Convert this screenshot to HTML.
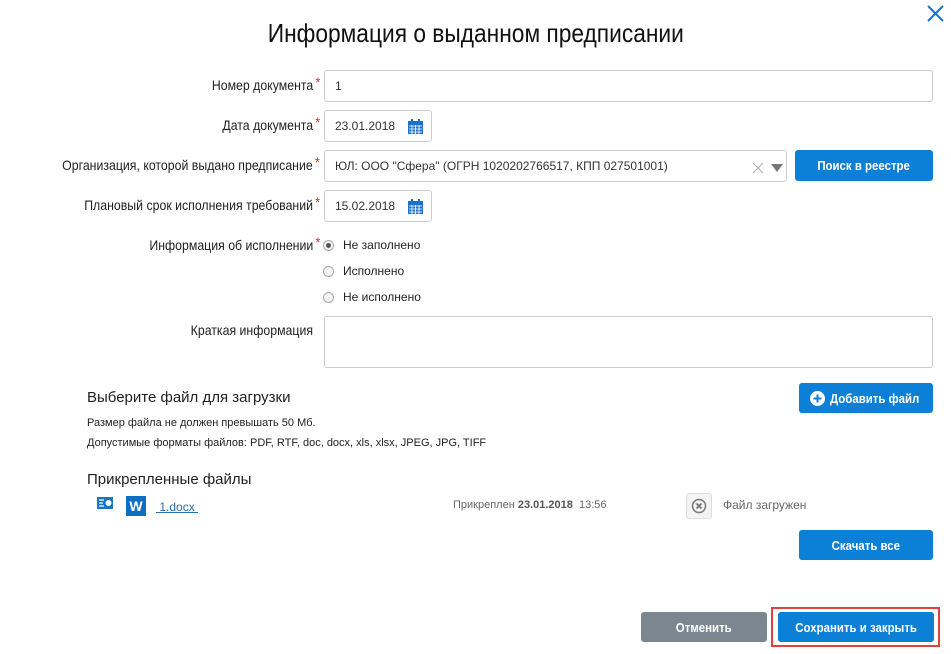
<!DOCTYPE html>
<html><head><meta charset="utf-8"><style>
body{margin:0;width:951px;height:654px;background:#fff;position:relative;overflow:hidden;font-family:"Liberation Sans",sans-serif;color:#222}
.a{position:absolute}
.lbl{position:absolute;right:638px;font-size:14px;white-space:nowrap;color:#222;transform:scaleX(0.88);transform-origin:right center}
.lbl b{color:#c0392b;font-weight:normal;position:absolute;right:-8px;top:-3px;font-size:14px}
.inp{position:absolute;border:1px solid #ccc;border-radius:3px;box-sizing:border-box;font-size:12px;color:#333;padding-left:10px;display:flex;align-items:center;background:#fff}
.btn{position:absolute;background:#0c7fd6;color:#fff;border-radius:3px;font-weight:bold;font-size:13px;display:flex;align-items:center;justify-content:center}
.btn span{display:inline-block;transform:scaleX(0.88);white-space:nowrap}
.rad{position:absolute;left:323px;width:11px;height:11px;border:1px solid #aaa;border-radius:50%;box-sizing:border-box;background:#f4f4f4}
.rt{position:absolute;left:343px;font-size:12px}
.cal{position:absolute;right:8px;top:8px}
</style></head><body>
<svg class="a" style="left:927px;top:5px" width="17" height="17"><path d="M1 1L16 16M16 1L1 16" stroke="#1a73c8" stroke-width="2"/></svg>
<div class="a" style="left:0;width:951px;top:18px;text-align:center;font-size:26px;color:#111"><span style="display:inline-block;transform:scaleX(0.875)">Информация о выданном предписании</span></div>

<div class="lbl" style="top:77px">Номер документа<b>*</b></div>
<div class="inp" style="left:324px;top:70px;width:609px;height:32px">1</div>

<div class="lbl" style="top:117px">Дата документа<b>*</b></div>
<div class="inp" style="left:324px;top:110px;width:108px;height:32px">23.01.2018
<svg class="cal" width="15" height="15"><rect x="0" y="2" width="15" height="13" fill="#1a73c8"/><rect x="3" y="0" width="2" height="4" fill="#1a73c8"/><rect x="10" y="0" width="2" height="4" fill="#1a73c8"/><path d="M1 7H14M1 10H14M1 13H14M4 6V15M7.5 6V15M11 6V15" stroke="#fff" stroke-width=".8"/></svg></div>

<div class="lbl" style="top:157px">Организация, которой выдано предписание<b>*</b></div>
<div class="inp" style="left:324px;top:150px;width:463px;height:32px">ЮЛ: ООО "Сфера" (ОГРН 1020202766517, КПП 027501001)
<svg class="a" style="left:427px;top:11px" width="32" height="12"><path d="M1 1L11 11M11 1L1 11" stroke="#aaa" stroke-width="1"/><path d="M19 2H31L25 10Z" fill="#777"/></svg></div>
<div class="btn" style="left:795px;top:150px;width:138px;height:31px"><span>Поиск в реестре</span></div>

<div class="lbl" style="top:197px">Плановый срок исполнения требований<b>*</b></div>
<div class="inp" style="left:324px;top:190px;width:108px;height:32px">15.02.2018
<svg class="cal" width="15" height="15"><rect x="0" y="2" width="15" height="13" fill="#1a73c8"/><rect x="3" y="0" width="2" height="4" fill="#1a73c8"/><rect x="10" y="0" width="2" height="4" fill="#1a73c8"/><path d="M1 7H14M1 10H14M1 13H14M4 6V15M7.5 6V15M11 6V15" stroke="#fff" stroke-width=".8"/></svg></div>

<div class="lbl" style="top:237px">Информация об исполнении<b>*</b></div>
<div class="rad" style="top:240px"><div style="width:5px;height:5px;background:#555;border-radius:50%;margin:2px"></div></div>
<div class="rt" style="top:238px">Не заполнено</div>
<div class="rad" style="top:266px"></div><div class="rt" style="top:264px">Исполнено</div>
<div class="rad" style="top:292px"></div><div class="rt" style="top:290px">Не исполнено</div>

<div class="lbl" style="top:322px">Краткая информация</div>
<div class="inp" style="left:324px;top:316px;width:609px;height:52px"></div>

<div class="a" style="left:87px;top:389px;font-size:15px">Выберите файл для загрузки</div>
<div class="btn" style="left:799px;top:383px;width:134px;height:30px"><svg width="15" height="15" style="margin-right:5px"><circle cx="7.5" cy="7.5" r="7.5" fill="#fff"/><path d="M7.5 3.5V11.5M3.5 7.5H11.5" stroke="#0c7fd6" stroke-width="2"/></svg><span style="transform-origin:left center;margin-right:-10px">Добавить файл</span></div>
<div class="a" style="left:87px;top:417px;font-size:11px">Размер файла не должен превышать 50 Мб.</div>
<div class="a" style="left:87px;top:437px;font-size:11px">Допустимые форматы файлов: PDF, RTF, doc, docx, xls, xlsx, JPEG, JPG, TIFF</div>

<div class="a" style="left:87px;top:471px;font-size:15px">Прикрепленные файлы</div>
<svg class="a" style="left:97px;top:496px" width="17" height="16"><rect x="0" y="1" width="16" height="12" fill="#1a73c8"/><path d="M2 4H7M2 7H6M2 10H7" stroke="#fff" stroke-width="1.2"/><circle cx="11.5" cy="7" r="3" fill="#fff"/></svg>
<div class="a" style="left:126px;top:496px;width:20px;height:20px;background:#0c6fc2;color:#fff;font-weight:bold;font-size:14px;text-align:center;line-height:20px">W</div>
<div class="a" style="left:156px;top:500px;font-size:12px;color:#2a6fb0;text-decoration:underline;white-space:pre"> 1.docx </div>
<div class="a" style="left:453px;top:499px;font-size:11px;color:#666">Прикреплен <b style="color:#555">23.01.2018</b>&nbsp; 13:56</div>
<div class="a" style="left:686px;top:493px;width:26px;height:26px;border:1px solid #ddd;border-radius:3px;box-sizing:border-box;background:#f4f4f4"><svg width="24" height="24"><circle cx="12" cy="12" r="6.5" fill="none" stroke="#777" stroke-width="1.5"/><path d="M9.5 9.5L14.5 14.5M14.5 9.5L9.5 14.5" stroke="#777" stroke-width="1.8"/></svg></div>
<div class="a" style="left:723px;top:498px;font-size:12px;color:#666">Файл загружен</div>
<div class="btn" style="left:799px;top:530px;width:134px;height:30px"><span>Скачать все</span></div>

<div class="btn" style="left:641px;top:612px;width:126px;height:30px;background:#7b8790"><span>Отменить</span></div>
<div class="a" style="left:771px;top:607px;width:169px;height:40px;border:2px solid #e04040;box-sizing:border-box"></div>
<div class="btn" style="left:778px;top:612px;width:156px;height:30px"><span>Сохранить и закрыть</span></div>
</body></html>
